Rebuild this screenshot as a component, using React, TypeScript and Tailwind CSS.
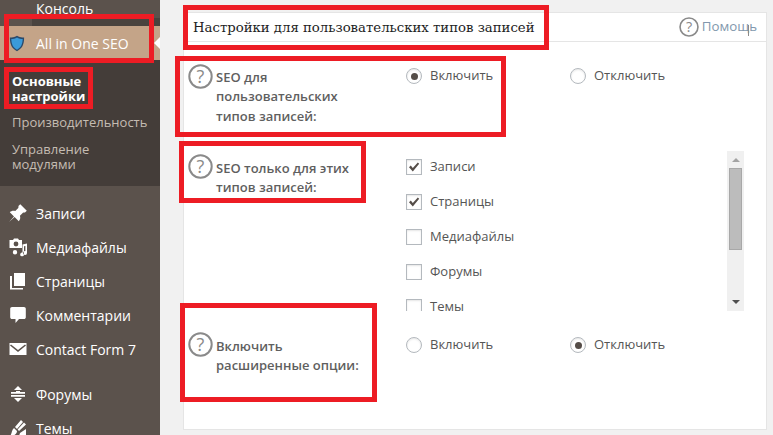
import React from 'react';

const sans = "font-['Open_Sans',sans-serif]";

const HelpIcon = ({ size = 25 }: { size?: number }) => (
  <svg width={size} height={size} viewBox="0 0 25 25" className="shrink-0">
    <circle cx="12.5" cy="12.5" r="11.2" fill="none" stroke="#8a8a8a" strokeWidth="2" />
    <text x="12.5" y="19" textAnchor="middle" fontSize="18" fill="#8a8a8a" fontFamily="Open Sans, sans-serif">?</text>
  </svg>
);

const Radio = ({ on }: { on?: boolean }) => (
  <span className="flex h-4 w-4 shrink-0 items-center justify-center rounded-full border border-[#b4b9be] bg-white shadow-[inset_0_1px_2px_rgba(0,0,0,0.1)]">
    {on && <span className="h-[7px] w-[7px] rounded-full bg-[#554d48]" />}
  </span>
);

const Checkbox = ({ on }: { on?: boolean }) => (
  <span className="flex h-4 w-4 shrink-0 items-center justify-center border border-[#b4b9be] bg-white shadow-[inset_0_1px_2px_rgba(0,0,0,0.1)]">
    {on && (
      <svg width="12" height="12" viewBox="0 0 12 12">
        <path d="M1 6.2 L2.8 4.6 L4.8 7 L9.8 1.4 L11.2 2.8 L4.8 10.6 Z" fill="#554d48" />
      </svg>
    )}
  </span>
);

const RadioOption = ({ on, label, className }: { on?: boolean; label: string; className: string }) => (
  <label className={`flex items-center gap-2 text-[13px] text-[#555] ${className}`}>
    <Radio on={on} />
    {label}
  </label>
);

const FieldLabel = ({ lines, offset }: { lines: string[]; offset: string }) => (
  <div className="flex w-[218px] shrink-0 gap-[3px]">
    <HelpIcon />
    <div className={`${offset} text-[13px] font-semibold leading-[19.3px] text-[#5f5f5f]`}>
      {lines.map((l) => (
        <div key={l}>{l}</div>
      ))}
    </div>
  </div>
);

const icons: Record<string, React.ReactNode> = {
  pin: (
    <path d="M10.44 3.02 L12.26 1.2 L18.8 7.73 L16.97 9.55 C16.3 9.43 15.62 9.49 14.95 9.73 L11.94 12.74 C12.62 14.66 12.17 16.8 10.78 18.19 L6.6 14 L1 19 L6 13.4 L1.81 9.22 C3.2 7.83 5.34 7.38 7.26 8.06 L10.27 5.05 C10.51 4.38 10.56 3.7 10.44 3.02 Z" />
  ),
  media: (
    <path fillRule="evenodd" d="M2 3 H5 L6 1.6 H10 L11 3 H14 V11 H1.5 V3 Z M8 4.6 A2.4 2.4 0 1 0 8 9.4 A2.4 2.4 0 0 0 8 4.6 Z M14.5 7.5 L19 6.6 V16 A1.9 1.9 0 1 1 17.4 14.1 V9 L16 9.2 V17.5 A1.9 1.9 0 1 1 14.5 15.6 Z M7 13 A2.2 2.2 0 1 1 7 17.4 A2.2 2.2 0 0 1 7 13 Z" />
  ),
  pages: (
    <path d="M6 2 H17 V15 H6 Z M2 5 H4 V17 H15 V18.5 H2 Z" />
  ),
  comment: (
    <path d="M4 2 H16 C17 2 17.8 2.8 17.8 3.8 V12.2 C17.8 13.2 17 14 16 14 H11 L7.5 18 V14 H4 C3 14 2.2 13.2 2.2 12.2 V3.8 C2.2 2.8 3 2 4 2 Z" />
  ),
  mail: (
    <path fillRule="evenodd" d="M1.5 4 H18.5 V16 H1.5 Z M3 5.4 L10 11 L17 5.4 L18 6.6 L10 13 L2 6.6 Z" />
  ),
  forum: (
    <path d="M10 2 L14 6 H6 Z M3 8 H17 V9.8 H3 Z M3 11 H17 V12.8 H3 Z M6 14 H14 L10 18 Z M8 7 H12 V8 H8 Z" />
  ),
  brush: (
    <path d="M13 2 L15 4 L9 11 L7 9 Z M16 4.6 L18 6.6 L11 13 L9.6 11.4 Z M6 10 L9 13 C9 16 6 18 2 18 C4 16 3.5 12 6 10 Z M12 15 L18 11 V18 H11 Z" />
  ),
};

const NavItem = ({ icon, label }: { icon: string; label: string }) => (
  <div className="flex h-[34px] items-center text-[14px] text-white">
    <svg width="20" height="20" viewBox="0 0 20 20" fill="#fff" className="ml-[8px] mr-[8px] shrink-0">
      {icons[icon]}
    </svg>
    {label}
  </div>
);

const App = () => (
  <div className={`relative flex h-[435px] w-[773px] overflow-hidden bg-[#f1f1f1] ${sans}`}>
    <aside className="w-[160px] shrink-0 bg-[#5b524c]">
      <div className="flex h-[18px] items-center pb-[1px] text-[14px] text-white">
        <svg width="20" height="20" viewBox="0 0 20 20" fill="#fff" className="ml-[8px] mr-[8px] mt-[-14px] shrink-0">
          <path d="M6 8 C8 4.5 12 4.5 14 8 L12.8 8 C11.5 6.4 8.5 6.4 7.2 8 Z" />
        </svg>
        Консоль
      </div>
      <div className="flex h-[8px]">
        <div className="w-[32px] bg-[#5b524c]" />
        <div className="flex-1 bg-[#4a433e]" />
      </div>
      <div className="relative flex h-[34px] items-center bg-[#c4a488] text-[14px] text-white">
        <svg width="16" height="17" viewBox="0 0 18 20" preserveAspectRatio="none" className="ml-[9px] mr-[11px] shrink-0">
          <path d="M9 1 C12 3 15 3 17 3 C17 11 15 16 9 19 C3 16 1 11 1 3 C3 3 6 3 9 1 Z" fill="#2b4a6b" />
          <path d="M9 3 C11 4.4 13.4 4.8 15.4 4.8 C15.2 11 13.6 14.8 9 17.4 C4.4 14.8 2.8 11 2.6 4.8 C4.6 4.8 7 4.4 9 3 Z" fill="#3a9ad9" />
        </svg>
        All in One SEO
        <span className="absolute right-0 top-[11px] h-0 w-0 border-y-[6px] border-r-[6px] border-y-transparent border-r-white" />
      </div>
      <div className="h-[126px] bg-[#443d39] px-[12px] pt-[14px] text-[13px] leading-[15px]">
        <div className="font-bold text-white">Основные настройки</div>
        <div className="mt-[11px] text-[#c4bcb2]">Производительность</div>
        <div className="mt-[12px] text-[#c4bcb2]">Управление модулями</div>
      </div>
      <div className="pt-[10px]">
        <NavItem icon="pin" label="Записи" />
        <NavItem icon="media" label="Медиафайлы" />
        <NavItem icon="pages" label="Страницы" />
        <NavItem icon="comment" label="Комментарии" />
        <NavItem icon="mail" label="Contact Form 7" />
        <div className="h-[11px]" />
        <NavItem icon="forum" label="Форумы" />
        <NavItem icon="brush" label="Темы" />
      </div>
    </aside>

    <main className="mt-[12px] ml-[23px] h-[418px] w-[584px] border border-[#e5e5e5] bg-white">
      <header className="relative flex h-[29px] items-center justify-between border-b border-[#e5e5e5] pl-[9px] pr-[9px]">
        <h1 className="pt-[2px] font-['DejaVu_Serif',serif] text-[13.25px] font-normal text-[#222]">
          Настройки для пользовательских типов записей
        </h1>
        <div className="flex items-center gap-[3px] text-[13.3px] text-[#8298ad]">
          <HelpIcon size={20} />
          Помощь
        </div>
        <span className="absolute right-[17px] top-[12px] h-[11px] w-px bg-[#8a8a8a]" />
      </header>

      <section className="flex h-[109px] pl-[4px] pt-[22px]">
        <FieldLabel lines={['SEO для', 'пользовательских', 'типов записей:']} offset="pt-[4px]" />
        <div className="flex pt-[2px]">
          <RadioOption on label="Включить" className="h-[20px] w-[164px]" />
          <RadioOption label="Отключить" className="h-[20px]" />
        </div>
      </section>

      <section className="flex h-[160px] pl-[4px]">
        <div className="pt-[3px]">
          <FieldLabel lines={['SEO только для этих', 'типов записей:']} offset="pt-[5px]" />
        </div>
        <div className="flex w-[338px] justify-between overflow-hidden">
          <div className="h-[160px] overflow-hidden pt-[8px] text-[13px] text-[#555]">
            {[
              ['Записи', true],
              ['Страницы', true],
              ['Медиафайлы', false],
              ['Форумы', false],
              ['Темы', false],
            ].map(([label, on]) => (
              <div key={label as string} className="mb-[19px] flex h-[16px] items-center gap-2">
                <Checkbox on={on as boolean} />
                {label}
              </div>
            ))}
          </div>
          <div className="flex h-[160px] w-[17px] flex-col items-center bg-[#f0f0f0]">
            <span className="mt-[7px] h-0 w-0 border-x-[4px] border-b-[4px] border-x-transparent border-b-[#a3a3a3]" />
            <span className="mt-[6px] h-[82px] w-[13px] border border-[#a8a8a8] bg-[#bcbcbc]" />
            <span className="mt-auto mb-[7px] h-0 w-0 border-x-[4px] border-t-[4px] border-x-transparent border-t-[#505050]" />
          </div>
        </div>
      </section>

      <section className="flex pl-[4px] pt-[21px]">
        <FieldLabel lines={['Включить', 'расширенные опции:']} offset="pt-[5px]" />
        <div className="flex pt-[3px]">
          <RadioOption label="Включить" className="h-[20px] w-[164px]" />
          <RadioOption on label="Отключить" className="h-[20px]" />
        </div>
      </section>
    </main>

    <div className="absolute left-[4px] top-[14px] h-[49px] w-[150px] border-[5px] border-[#ed1c24]" />
    <div className="absolute left-[4px] top-[67px] h-[42px] w-[89px] border-[5px] border-[#ed1c24]" />
    <div className="absolute left-[183px] top-[5px] h-[45px] w-[366px] border-[5px] border-[#ed1c24]" />
    <div className="absolute left-[175px] top-[56px] h-[81px] w-[331px] border-[5px] border-[#ed1c24]" />
    <div className="absolute left-[179px] top-[141px] h-[62px] w-[187px] border-[5px] border-[#ed1c24]" />
    <div className="absolute left-[180px] top-[303px] h-[99px] w-[197px] border-[5px] border-[#ed1c24]" />
  </div>
);

export default App;
